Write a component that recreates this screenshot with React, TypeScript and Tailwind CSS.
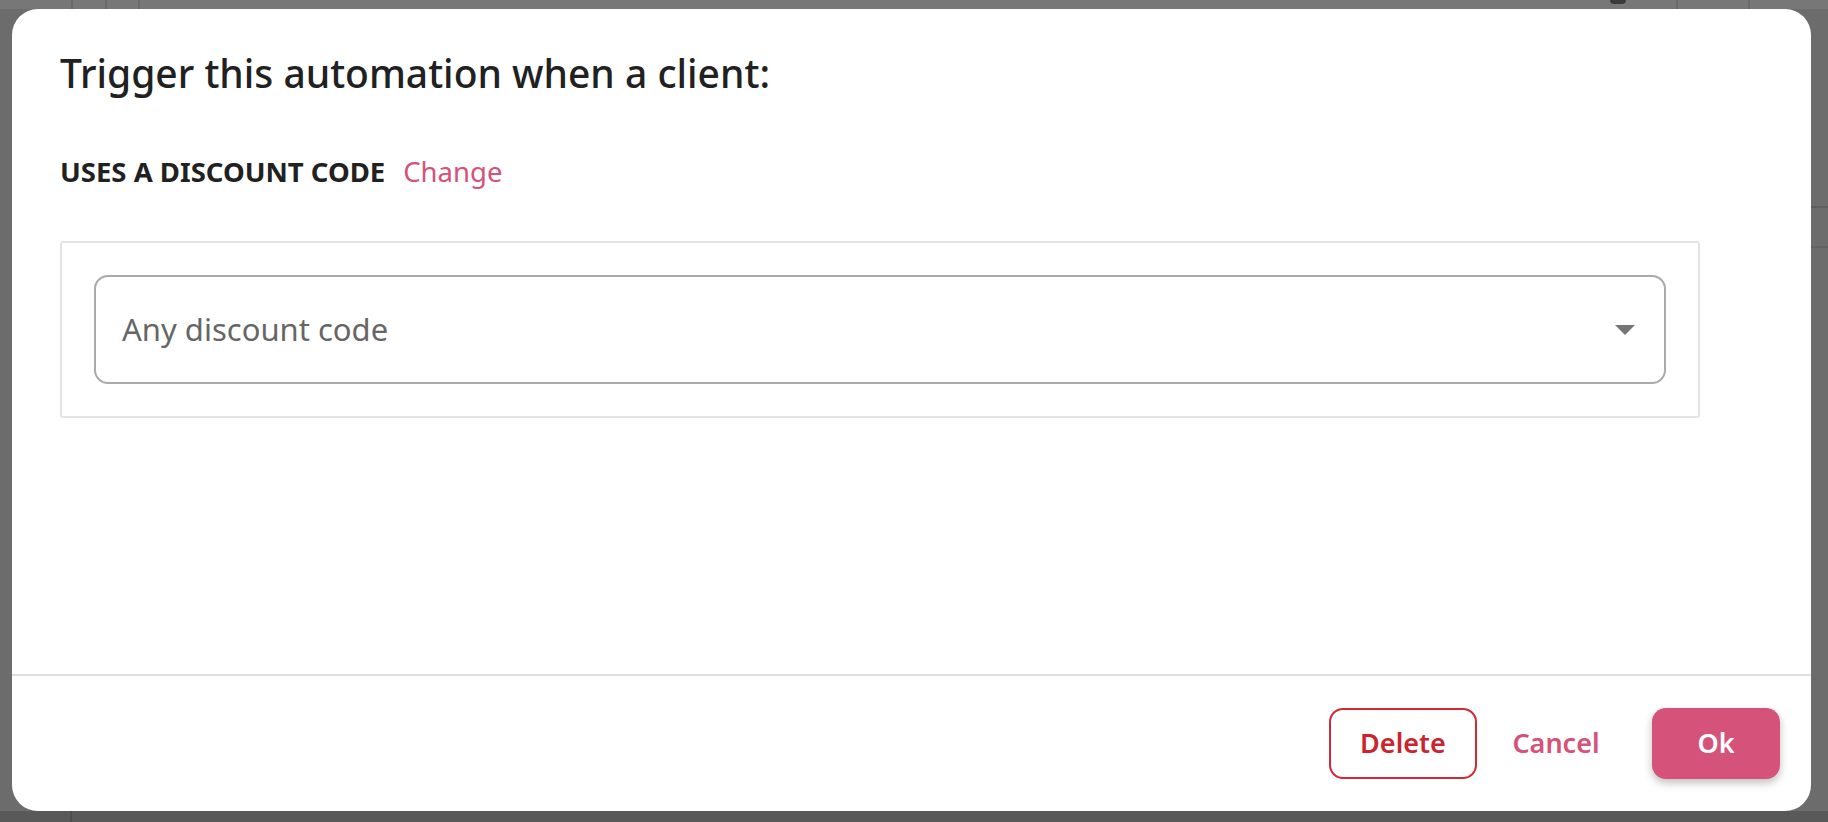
import React from "react";

export default function App() {
  const font = { fontFamily: '"Noto Sans", "Open Sans", sans-serif' };
  return (
    <div className="w-full h-[822px] overflow-hidden bg-[#6c6c6c] flex flex-col" style={font}>
      {/* strip of the page behind the overlay */}
      <div className="h-[9px] shrink-0 bg-[#777777] flex">
        <div className="w-[73px] border-r-2 border-[#6a6a6a]" />
        <div className="w-[34px] border-r-2 border-[#6a6a6a]" />
        <div className="w-[33px] border-r-2 border-[#6a6a6a]" />
        <div className="flex-1" />
        <div className="w-[16px] h-[4px] rounded-b-full bg-[#3a3a3a] mr-[50px]" />
        <div className="w-[74px] border-l-2 border-r-2 border-[#6a6a6a]" />
        <div className="w-[78px]" />
      </div>

      <div className="flex-1 flex min-h-0">
        <div className="w-[12px] shrink-0" />
        <div className="flex-1 bg-white rounded-[26px] flex flex-col">
          <div className="flex-1 pl-[48px] pt-[37px]">
            <h1 className="text-[39px] leading-[54px] font-medium text-[#212121]">
              Trigger this automation when a client:
            </h1>
            <div className="mt-[53px] flex items-baseline text-[27.5px] leading-[38px]">
              <span className="font-bold text-[#212121]">USES A DISCOUNT CODE</span>
              <span className="ml-[18px] text-[#d5527a]">Change</span>
            </div>
            <div className="mt-[50px] w-[1640px] border-2 border-[#e3e3e3] rounded-[3px] p-[32px]">
              <div className="h-[109px] border-2 border-[#a9a9a9] rounded-[14px] flex items-center justify-between pl-[26px] pr-[29px]">
                <span className="text-[31px] text-[#666666]">Any discount code</span>
                <svg width="20" height="10" viewBox="0 0 20 10">
                  <polygon points="0,0 20,0 10,10" fill="#757575" />
                </svg>
              </div>
            </div>
          </div>
          <div className="h-[2px] bg-[#e0e0e0]" />
          <div className="h-[135px] flex items-center justify-end gap-[13px] pr-[31px]">
            <button className="w-[148px] h-[71px] border-2 border-[#cf2a35] rounded-[14px] text-[27px] font-semibold text-[#c9252f] flex items-center justify-center">
              Delete
            </button>
            <button className="w-[132px] h-[71px] text-[27px] font-semibold text-[#d5527a] flex items-center justify-center">
              Cancel
            </button>
            <button className="ml-[17px] w-[128px] h-[71px] rounded-[14px] bg-[#d5527a] text-white text-[27px] font-semibold flex items-center justify-center shadow-[0_4px_8px_rgba(0,0,0,0.25)]">
              Ok
            </button>
          </div>
        </div>
        <div className="w-[17px] shrink-0 flex flex-col">
          <div className="h-[199px] border-b-2 border-[#5e5e5e]" />
          <div className="h-[40px] border-b-2 border-[#626262]" />
        </div>
      </div>

      <div className="h-[11px] shrink-0 bg-[#595959] flex">
        <div className="w-[72px] border-r-2 border-[#4e4e4e]" />
      </div>
    </div>
  );
}
